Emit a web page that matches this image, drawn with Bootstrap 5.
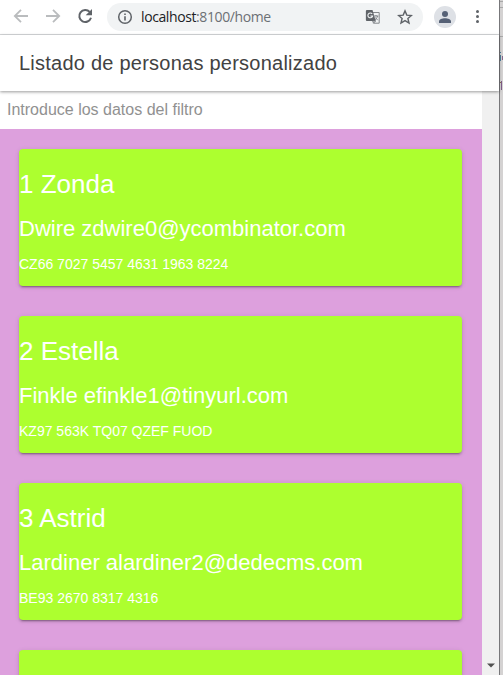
<!DOCTYPE html>
<html lang="es">
<head>
<meta charset="utf-8">
<meta name="viewport" content="width=device-width, initial-scale=1">
<title>Listado de personas</title>
<link href="https://cdn.jsdelivr.net/npm/bootstrap@5.3.0/dist/css/bootstrap.min.css" rel="stylesheet">
<style>
html, body { height: 100%; overflow: hidden; }
body { font-family: "Liberation Sans", Arial, sans-serif; background: #d4d2d2; }
.browser { width: 500px; border-right: 1px solid #77777a; }
.desktop-edge { width: 3px; background: #d4d2d2; }
.toolbar-row { height: 35px; border-bottom: 1px solid #d8dadc; padding-bottom: 2px; }
.nav-icons { width: 107px; padding-left: 13px; gap: 16px; }
.address { width: 316px; height: 28px; background: #f1f3f4; padding: 0 10px; margin-top: 1px; }
.address-text { font: 14px/20px "Open Sans", sans-serif; color: #202124; margin-left: 8px; letter-spacing: -.4px; }
.address-text span { color: #6c7075; }
.avatar { width: 22px; height: 22px; background: #dee1e6; margin-left: 11px; margin-top: 1px; }
.title-bar { height: 56px; padding-left: 19px; box-shadow: 0 1px 3px rgba(0,0,0,.4); z-index: 1; }
.title-bar h1 { font-size: 20px; line-height: 24px; letter-spacing: .24px; color: #424242; }
.filter-row { height: 38px; padding-left: 7px; padding-bottom: 1px; }
.filter-input { font-size: 16px; line-height: 20px; color: #919191; border: 0; padding: 0; outline: 0; background: none; }
.filter-input::placeholder { color: #919191; opacity: 1; }
.people { background: #dda0dd; padding: 20px 20px 0 19px; gap: 30px; }
.person { height: 137px; border: 0; border-radius: 4px; background: #adff2f; color: #fff; flex: none; padding-top: 20px;
  box-shadow: 0 3px 1px -2px rgba(0,0,0,.2), 0 2px 2px 0 rgba(0,0,0,.14), 0 1px 5px 0 rgba(0,0,0,.12); }
.person h2 { font-size: 26px; line-height: 31px; margin: 0 0 16px; }
.person h3 { font-size: 22px; line-height: 26px; margin: 0 0 12px; }
.person p { font-size: 14px; line-height: 20px; margin: 0; }
.scroll-track { width: 17px; background: #f0f0f0; padding-bottom: 7px; }
</style>
<script src="https://cdn.jsdelivr.net/npm/bootstrap@5.3.0/dist/js/bootstrap.bundle.min.js"></script>
</head>
<body>
<div class="d-flex vh-100 overflow-hidden">
  <div class="browser d-flex flex-column bg-white flex-shrink-0">
    <div class="toolbar-row d-flex align-items-center flex-shrink-0">
      <div class="nav-icons d-flex align-items-center">
        <svg width="16" height="16" viewBox="0 0 16 16" fill="none" stroke="#babcbe" stroke-width="1.8"><path d="M15 8H2.5M8 1.8 1.8 8 8 14.2"/></svg>
        <svg width="16" height="16" viewBox="0 0 16 16" fill="none" stroke="#babcbe" stroke-width="1.8"><path d="M1 8h12.5M8 1.8 14.2 8 8 14.2"/></svg>
        <svg width="16" height="16" viewBox="0 0 16 16"><path d="M12.7 3.9A6 6 0 1 0 14 9.8" fill="none" stroke="#5f6368" stroke-width="2"/><path d="M15 1v6.3H8.7z" fill="#5f6368"/></svg>
      </div>
      <div class="address rounded-pill d-flex align-items-center">
        <svg width="16" height="16" viewBox="0 0 16 16"><circle cx="8" cy="8" r="6.3" fill="none" stroke="#5f6368" stroke-width="1.5"/><path d="M7.2 7.2h1.6v4.3H7.2zM7.2 4.4h1.6V6H7.2z" fill="#5f6368"/></svg>
        <div class="address-text">localhost<span>:8100/home</span></div>
        <svg class="ms-auto" width="16" height="16" viewBox="0 0 16 16"><path d="M6 3.5h8.2v10.7H8.5" fill="#f1f3f4" stroke="#85888c"/><path d="M1.8 1h5.7l3.2 11H1.8a.9.9 0 0 1-.9-.9V1.9c0-.5.4-.9.9-.9z" fill="#5f6368"/><path d="M7.2 4.9A2.4 2.4 0 1 0 7.6 7H5.4" fill="none" stroke="#f1f3f4" stroke-width="1.1"/><path d="M8.8 7h4.5M11 6v1m1.5 0c-.3 1.8-1.3 3-2.5 4M9.8 8.2l3 3M7.7 12l2.9 0-2.1 2.2z" fill="none" stroke="#777b80" stroke-width=".9"/></svg>
        <svg class="ms-3" width="16" height="16" viewBox="0 0 16 16"><path d="m8 1.9 1.8 4.2 4.6.4-3.5 3 1.1 4.5L8 11.6 4 14l1.1-4.5-3.5-3 4.6-.4z" fill="none" stroke="#5f6368" stroke-width="1.4"/></svg>
      </div>
      <div class="avatar rounded-circle d-flex align-items-center justify-content-center">
        <svg width="14" height="14" viewBox="0 0 14 14" fill="#566176"><circle cx="7" cy="4" r="3"/><path d="M1 13v-1.7C1 9.3 4.2 8.2 7 8.2s6 1.1 6 3.1V13z"/></svg>
      </div>
      <svg class="ms-3" width="14" height="16" viewBox="0 0 14 16" fill="#5f6368"><circle cx="5.5" cy="3.5" r="1.5"/><circle cx="5.5" cy="8.5" r="1.5"/><circle cx="5.5" cy="13.5" r="1.5"/></svg>
    </div>
    <header class="title-bar bg-white d-flex align-items-center flex-shrink-0 position-relative">
      <h1 class="fw-normal mb-0">Listado de personas personalizado</h1>
    </header>
    <div class="d-flex flex-fill overflow-hidden">
      <main class="d-flex flex-column flex-fill">
        <div class="filter-row bg-white d-flex align-items-center flex-shrink-0">
          <input class="filter-input w-100" type="text" placeholder="Introduce los datos del filtro" aria-label="Filtro">
        </div>
        <div class="people d-flex flex-column flex-fill overflow-hidden">
          <article class="card person">
            <h2 class="fw-normal">1 Zonda</h2>
            <h3 class="fw-normal">Dwire zdwire0@ycombinator.com</h3>
            <p>CZ66 7027 5457 4631 1963 8224</p>
          </article>
          <article class="card person">
            <h2 class="fw-normal">2 Estella</h2>
            <h3 class="fw-normal">Finkle efinkle1@tinyurl.com</h3>
            <p>KZ97 563K TQ07 QZEF FUOD</p>
          </article>
          <article class="card person">
            <h2 class="fw-normal">3 Astrid</h2>
            <h3 class="fw-normal">Lardiner alardiner2@dedecms.com</h3>
            <p>BE93 2670 8317 4316</p>
          </article>
          <article class="card person"></article>
        </div>
      </main>
      <div class="scroll-track d-flex align-items-end justify-content-center flex-shrink-0">
        <svg width="8" height="5" viewBox="0 0 8 5"><path d="M0 .5h8L4 4.5z" fill="#505050"/></svg>
      </div>
    </div>
  </div>
  <div class="desktop-edge overflow-hidden flex-shrink-0">
    <svg class="d-block" width="3" height="100" viewBox="0 0 3 100" shape-rendering="crispEdges">
      <path d="M0 1h3v1H0zM0 7h3v1H0zM0 36h3v1H0z" fill="#a8a8a8"/>
      <path d="M0 52h1v1H0zM0 55h1v6H0z" fill="#527f9c"/>
      <path d="M2 56h1v4H2z" fill="#87688a"/>
      <path d="M1 81h1v9H1z" fill="#7f5b88"/>
      <path d="M0 82h1v1H0z" fill="#8a7350"/>
    </svg>
  </div>
</div>
</body>
</html>
